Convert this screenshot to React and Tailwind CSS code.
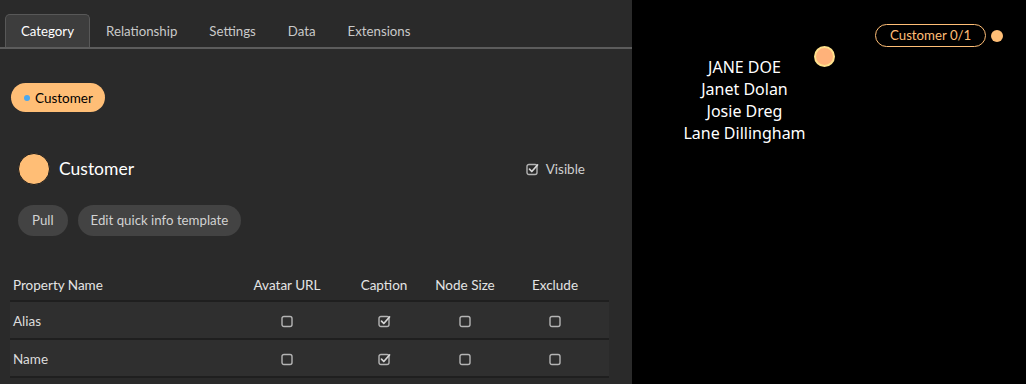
import React from 'react';

const tabs = ['Category', 'Relationship', 'Settings', 'Data', 'Extensions'];

const rows = [
    { name: 'Alias', avatar: false, caption: true, size: false, exclude: false },
    { name: 'Name', avatar: false, caption: true, size: false, exclude: false },
];

const names = ['JANE DOE', 'Janet Dolan', 'Josie Dreg', 'Lane Dillingham'];

function Box({ checked }) {
    return (
        <svg width="13" height="13" viewBox="0 0 13 13" fill="none">
            <rect x="1" y="1.5" width="10" height="10" rx="2" stroke="#b4b4b4" strokeWidth="1.4" />
            {checked && (
                <path d="M3.5 6.2 L5.8 8.5 L11.5 2" stroke="#d8d8d8" strokeWidth="1.7" strokeLinecap="round" strokeLinejoin="round" />
            )}
        </svg>
    );
}

function App() {
    return (
        <div className="flex w-[1026px] h-[384px] overflow-hidden font-['Lato','Liberation_Sans',sans-serif]">
            <div className="w-[632px] bg-[#2a2a2a] flex flex-col">
                <div className="flex pt-[14px] px-[5px] border-b-2 border-[#5c5c5c]">
                    {tabs.map((t, i) => (
                        <div
                            key={t}
                            className={
                                i === 0
                                    ? 'h-[33px] pt-[2px] px-[15px] flex items-center text-[13.25px] text-white bg-[#3d3d3d] border border-b-0 border-[#585858] rounded-t-[5px]'
                                    : 'h-[33px] pt-[2px] px-4 flex items-center text-[13.25px] text-[#c9c9c9]'
                            }
                        >
                            {t}
                        </div>
                    ))}
                </div>

                <div className="px-[10px] pt-[34px]">
                    <div className="flex">
                        <div className="ml-px h-[29px] pl-[13px] pr-3 pt-px rounded-full bg-[#ffbe76] flex items-center gap-[5px] text-[13.5px] text-black">
                            <span className="w-[6px] h-[6px] rounded-full bg-[#4aa8f0]" />
                            Customer
                        </div>
                    </div>

                    <div className="mt-[41px] ml-2 mr-[37px] flex items-center justify-between">
                        <div className="flex items-center gap-[9px]">
                            <div className="w-[32px] h-[32px] rounded-full bg-[#ffbe76] border border-[#1a1a1a]" />
                            <span className="text-[17.5px] text-white">Customer</span>
                        </div>
                        <div className="flex items-center gap-[7px] text-[13.5px] text-[#cfcfcf]">
                            <Box checked />
                            Visible
                        </div>
                    </div>

                    <div className="mt-[20px] ml-2 flex gap-[10px]">
                        <button className="h-[31px] px-[14px] pt-px rounded-full bg-[#434343] text-[13.25px] text-[#d2d2d2]">Pull</button>
                        <button className="h-[31px] px-[13px] pt-px rounded-full bg-[#434343] text-[13.25px] text-[#d2d2d2]">Edit quick info template</button>
                    </div>

                    <div className="mt-[32px] w-[599px]">
                        <div className="grid grid-cols-[225px_104px_90px_72px_108px] h-[34px] pt-[2px] items-center text-[13.5px] text-[#e4e4e4] border-b-2 border-[#1f1f1f]">
                            <div className="pl-[3px]">Property Name</div>
                            <div className="text-center">Avatar URL</div>
                            <div className="text-center">Caption</div>
                            <div className="text-center">Node Size</div>
                            <div className="text-center">Exclude</div>
                        </div>
                        {rows.map((r) => (
                            <div
                                key={r.name}
                                className="grid grid-cols-[225px_104px_90px_72px_108px] h-[38px] pt-[2px] items-center text-[13.5px] text-[#dcdcdc] bg-[#2f2f2f] border-b-2 border-[#1f1f1f]"
                            >
                                <div className="pl-[3px]">{r.name}</div>
                                <div className="flex justify-center"><Box checked={r.avatar} /></div>
                                <div className="flex justify-center"><Box checked={r.caption} /></div>
                                <div className="flex justify-center"><Box checked={r.size} /></div>
                                <div className="flex justify-center"><Box checked={r.exclude} /></div>
                            </div>
                        ))}
                    </div>
                </div>
            </div>

            <div className="relative flex-1 bg-black">
                <div className="absolute left-[243px] top-[24px] flex items-center gap-[5px]">
                    <div className="h-[23px] px-[14px] pt-px rounded-full border border-[#ffbe76] flex items-center text-[13.25px] text-[#ffbe76]">
                        Customer 0/1
                    </div>
                    <div className="w-[12px] h-[12px] rounded-full bg-[#ffbe76]" />
                </div>
                <div className="absolute left-[182px] top-[46px] w-[21px] h-[21px] rounded-full bg-[#ffb27a] border-2 border-[#ffe08c]" />
                <div className="absolute left-[31px] top-[56px] w-[163px] text-center text-[16px] leading-[22px] text-white font-['Noto_Sans','Open_Sans',sans-serif]">
                    {names.map((n) => (
                        <div key={n}>{n}</div>
                    ))}
                </div>
            </div>
        </div>
    );
}

export default App;
